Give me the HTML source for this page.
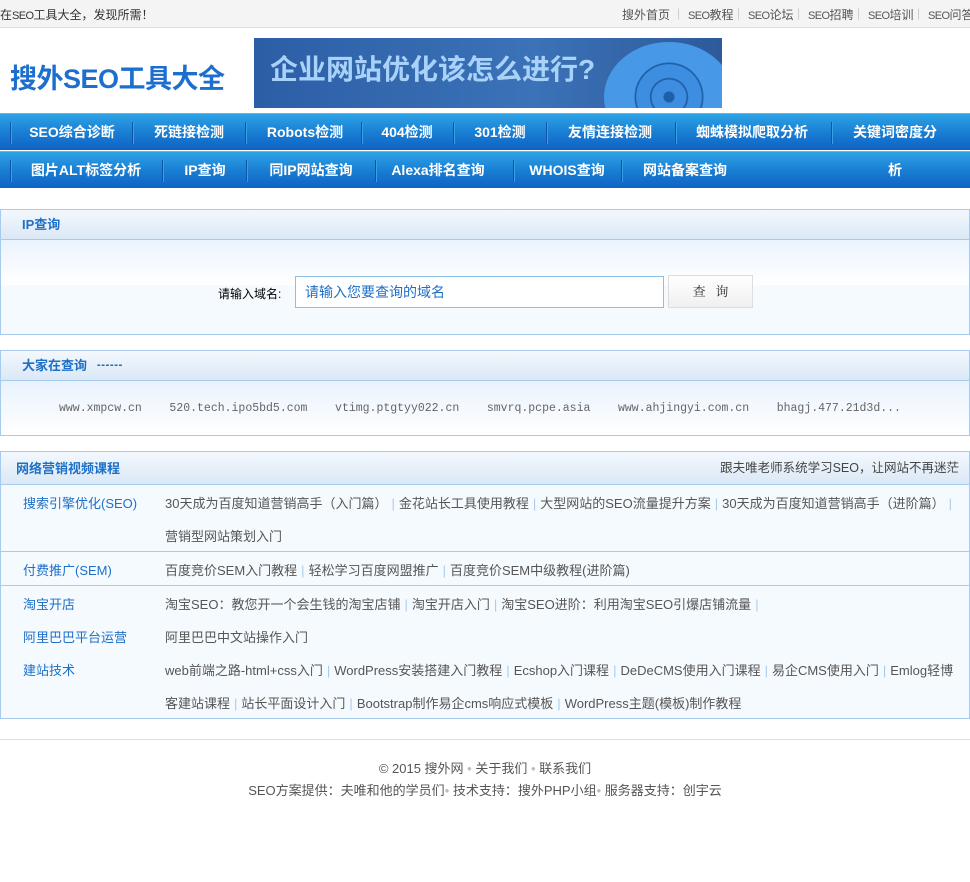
<!DOCTYPE html>
<html><head><meta charset="utf-8">
<style>
*{margin:0;padding:0;box-sizing:border-box}
body{width:970px;height:882px;background:#fff;font-family:"Liberation Sans","Noto Sans CJK SC",sans-serif;position:relative;overflow:hidden;font-size:12px;color:#333}
.abs{position:absolute;white-space:nowrap}
#top{position:absolute;left:0;top:0;width:970px;height:28px;background:#f4f4f4;border-bottom:1px solid #ddd}
.tl{position:absolute;top:6px;font-size:12px;color:#555;white-space:nowrap}
.tl em{font-style:normal;font-size:11px;letter-spacing:-0.6px}
.ts{position:absolute;top:6px;color:#ccc;font-size:12px}
.nav{position:absolute;left:0;width:970px;height:37px;background:linear-gradient(#2da3e6,#1a7fd4 50%,#0e62c4);border-top:1px solid #5ab9ef;}
.nav span{position:absolute;top:0;height:36px;line-height:36px;color:#fff;font-weight:bold;font-size:14px;transform:translateX(-50%);white-space:nowrap;font-family:"Liberation Sans","Noto Sans CJK SC",sans-serif}
.nav i{position:absolute;top:8px;width:2px;height:22px;border-left:1px solid #0c56a8;border-right:1px solid #3aa0e6}
.panel{position:absolute;left:0;width:970px;border:1px solid #a7cbee;background:#f5faff}
.ph{height:30px;background:linear-gradient(#f3f8fd,#dbe8f6);border-bottom:1px solid #a7cbee;color:#1d6fc8;font-weight:bold;font-size:13px;line-height:30px;padding-left:21px;font-family:"Liberation Sans","Noto Sans CJK SC",sans-serif}
.lbl{position:absolute;left:22px;color:#1d6fc8;font-size:13px}
.ct{position:absolute;left:164px;color:#555;font-size:13px;white-space:nowrap}
.ct b{font-weight:normal;color:#a7cbee;margin:0 4px}
</style></head><body>
<div id="top"></div>
<div class="abs" style="left:0;top:6px;font-size:12px;color:#333">在<em style="font-style:normal;font-size:11px;letter-spacing:-0.6px">SEO</em>工具大全，发现所需！</div>
<div class="tl" style="left:622px">搜外首页</div><span class="ts" style="left:677px">|</span>
<div class="tl" style="left:688px"><em>SEO</em>教程</div><span class="ts" style="left:737px">|</span>
<div class="tl" style="left:748px"><em>SEO</em>论坛</div><span class="ts" style="left:797px">|</span>
<div class="tl" style="left:808px"><em>SEO</em>招聘</div><span class="ts" style="left:857px">|</span>
<div class="tl" style="left:868px"><em>SEO</em>培训</div><span class="ts" style="left:917px">|</span>
<div class="tl" style="left:928px"><em>SEO</em>问答</div>
<div class="abs" style="left:10px;top:57px;font-size:27px;font-weight:bold;color:#1d6fcf;font-family:'Liberation Sans','Noto Sans CJK SC',sans-serif;letter-spacing:-0.5px">搜外SEO工具大全</div>
<div class="abs" style="left:254px;top:38px;width:468px;height:70px;background:linear-gradient(90deg,#2c5ea6,#3b72b8 60%,#2d5a98);overflow:hidden">
 <div style="position:absolute;left:16px;top:10px;font-size:28px;font-weight:bold;color:#a8d2fa;font-family:'Liberation Sans','Noto Sans CJK SC',sans-serif">企业网站优化该怎么进行?</div>
 <div style="position:absolute;left:350px;top:4px;width:130px;height:110px;border-radius:50%;background:radial-gradient(circle,#1f5fa8 0 6%,#3d8ee0 7% 20%,#1f5fa8 21% 22%,#3d8ee0 23% 38%,#1f5fa8 39% 40%,#4799e8 41%)"></div>
</div>
<div class="nav" style="top:113px">
<i style="left:10px"></i><span style="left:72px">SEO综合诊断</span><i style="left:132px"></i><span style="left:189px">死链接检测</span><i style="left:245px"></i><span style="left:305px">Robots检测</span><i style="left:361px"></i><span style="left:407px">404检测</span><i style="left:453px"></i><span style="left:500px">301检测</span><i style="left:546px"></i><span style="left:610px">友情连接检测</span><i style="left:675px"></i><span style="left:752px">蜘蛛模拟爬取分析</span><i style="left:831px"></i><span style="left:895px">关键词密度分</span>
</div>
<div class="nav" style="top:151px">
<i style="left:10px"></i><span style="left:86px">图片ALT标签分析</span><i style="left:162px"></i><span style="left:205px">IP查询</span><i style="left:246px"></i><span style="left:311px">同IP网站查询</span><i style="left:375px"></i><span style="left:438px">Alexa排名查询</span><i style="left:513px"></i><span style="left:567px">WHOIS查询</span><i style="left:621px"></i><span style="left:685px">网站备案查询</span><span style="left:895px">析</span>
</div>

<div class="panel" style="top:209px;height:126px;background:linear-gradient(#dcecfb,#fff 60%,#f5faff 61%)">
<div class="ph">IP查询</div>
<div class="abs" style="left:217px;top:75px;color:#000;font-size:12px">请输入域名:</div>
<div class="abs" style="left:294px;top:66px;width:369px;height:32px;border:1px solid #8cc0e6;background:#fff;color:#1d6fc8;font-size:14px;line-height:30px;padding-left:9px">请输入您要查询的域名</div>
<div class="abs" style="left:667px;top:65px;width:85px;height:33px;border:1px solid #ddd;background:linear-gradient(#fff,#f0f0f0);text-align:center;line-height:31px;font-size:13px;color:#333;font-family:'Liberation Serif','Noto Serif CJK SC',serif">查&nbsp;&nbsp;&nbsp;询</div>
</div>

<div class="panel" style="top:350px;height:86px;background:linear-gradient(#dcecfb,#fff)">
<div class="ph">大家在查询 <span style="margin-left:6px">┅┅</span></div>
<div class="abs" style="left:58px;top:51px;font-family:'Liberation Mono','Noto Sans CJK SC',monospace;font-size:11.5px;color:#666">www.xmpcw.cn&nbsp;&nbsp;&nbsp;&nbsp;520.tech.ipo5bd5.com&nbsp;&nbsp;&nbsp;&nbsp;vtimg.ptgtyy022.cn&nbsp;&nbsp;&nbsp;&nbsp;smvrq.pcpe.asia&nbsp;&nbsp;&nbsp;&nbsp;www.ahjingyi.com.cn&nbsp;&nbsp;&nbsp;&nbsp;bhagj.477.21d3d...</div>
</div>

<div class="panel" style="top:451px;height:268px">
<div class="ph" style="height:33px;line-height:33px;padding-left:15px">网络营销视频课程<span style="position:absolute;right:10px;font-weight:normal;color:#444;font-size:12.5px">跟夫唯老师系统学习SEO，让网站不再迷茫</span></div>
<div class="lbl" style="top:41px">搜索引擎优化(SEO)</div>
<div class="ct" style="top:41px">30天成为百度知道营销高手（入门篇）<b>|</b>金花站长工具使用教程<b>|</b>大型网站的SEO流量提升方案<b>|</b>30天成为百度知道营销高手（进阶篇）<b>|</b></div>
<div class="ct" style="top:74px">营销型网站策划入门</div>
<div class="abs" style="left:0;top:99px;width:968px;border-top:1px solid #a7cbee"></div>
<div class="lbl" style="top:108px">付费推广(SEM)</div>
<div class="ct" style="top:108px">百度竞价SEM入门教程<b>|</b>轻松学习百度网盟推广<b>|</b>百度竞价SEM中级教程(进阶篇)</div>
<div class="abs" style="left:0;top:133px;width:968px;border-top:1px solid #a7cbee"></div>
<div class="lbl" style="top:142px">淘宝开店</div>
<div class="ct" style="top:142px">淘宝SEO：教您开一个会生钱的淘宝店铺<b>|</b>淘宝开店入门<b>|</b>淘宝SEO进阶：利用淘宝SEO引爆店铺流量<b>|</b></div>
<div class="lbl" style="top:175px">阿里巴巴平台运营</div>
<div class="ct" style="top:175px">阿里巴巴中文站操作入门</div>
<div class="lbl" style="top:208px">建站技术</div>
<div class="ct" style="top:208px">web前端之路-html+css入门<b>|</b>WordPress安装搭建入门教程<b>|</b>Ecshop入门课程<b>|</b>DeDeCMS使用入门课程<b>|</b>易企CMS使用入门<b>|</b>Emlog轻博</div>
<div class="ct" style="top:241px">客建站课程<b>|</b>站长平面设计入门<b>|</b>Bootstrap制作易企cms响应式模板<b>|</b>WordPress主题(模板)制作教程</div>
</div>

<div class="abs" style="left:0;top:739px;width:970px;border-top:1px solid #ddd"></div>
<div class="abs" style="left:0;top:758px;width:970px;text-align:center;font-size:13px;color:#555">© 2015 搜外网 <span style="color:#bbb">•</span> 关于我们 <span style="color:#bbb">•</span> 联系我们</div>
<div class="abs" style="left:0;top:780px;width:970px;text-align:center;font-size:13px;color:#555">SEO方案提供：夫唯和他的学员们<span style="color:#bbb">•</span> 技术支持：搜外PHP小组<span style="color:#bbb">•</span> 服务器支持：创宇云</div>
</body></html>
